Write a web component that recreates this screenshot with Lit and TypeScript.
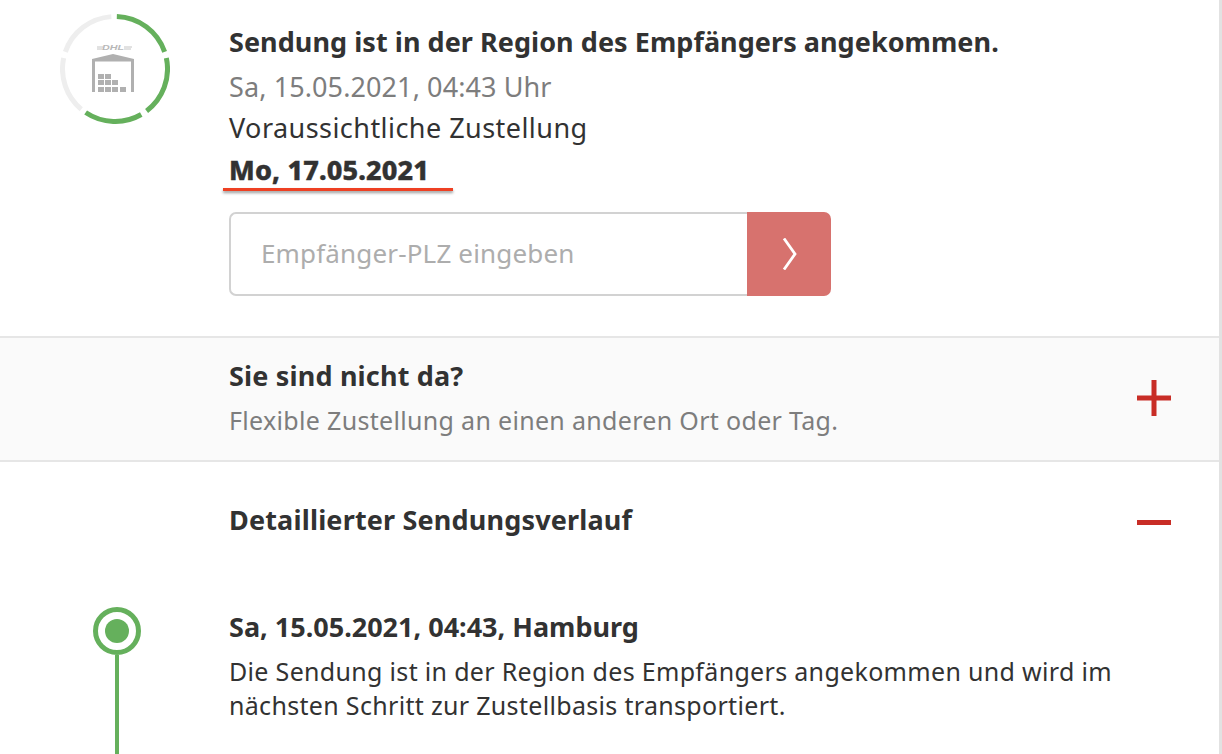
import { LitElement, html, css, svg } from "lit";
import { customElement } from "lit/decorators.js";

// five ring segments, clockwise from twelve o'clock
const arc = (from: number, to: number) => {
  const pt = (a: number) => {
    const r = ((a - 90) * Math.PI) / 180;
    return `${(55 + 52.5 * Math.cos(r)).toFixed(2)} ${(55 + 52.5 * Math.sin(r)).toFixed(2)}`;
  };
  return `M${pt(from)} A52.5 52.5 0 0 1 ${pt(to)}`;
};

const segments = [
  { from: 2, to: 71, color: "#65b05c" },
  { from: 78, to: 143, color: "#65b05c" },
  { from: 150, to: 214, color: "#65b05c" },
  { from: 220, to: 282, color: "#eeeeee" },
  { from: 289, to: 356, color: "#eeeeee" },
];

// crates in the warehouse door: [x, y]
const crates = [
  [38, 60],
  [45, 60],
  [38, 66],
  [45, 66],
  [52, 66],
  [38, 73],
  [45, 73],
  [52, 73],
  [60, 73],
];

@customElement("app-root")
export class AppRoot extends LitElement {
  static styles = css`
    :host {
      display: block;
      width: 1222px;
      height: 754px;
      overflow: hidden;
      background: #fff;
      font-family: "Noto Sans", sans-serif;
      color: #323232;
      font-size: 25px;
      box-sizing: border-box;
      border-right: 3px solid #e2e2e2;
    }
    .row {
      display: grid;
      grid-template-columns: 229px 1fr;
    }
    .status {
      height: 336px;
      padding-top: 14px;
      box-sizing: border-box;
    }
    .ring {
      margin-left: 60px;
      width: 110px;
      height: 110px;
      display: block;
    }
    .status-text {
      padding-top: 7px;
    }
    .title {
      font-weight: 700;
      font-size: 27px;
      line-height: 41px;
      letter-spacing: 0.05px;
      margin-bottom: 4px;
    }
    .muted {
      color: #7d7d7d;
      line-height: 41px;
    }
    .status-text .muted,
    .plain {
      font-size: 27px;
      line-height: 41px;
      letter-spacing: 0.1px;
    }
    .plain {
      letter-spacing: 0.45px;
    }
    .date {
      display: inline-block;
      font-weight: 800;
      font-size: 27px;
      line-height: 36px;
      margin-top: 4px;
      letter-spacing: 0.15px;
      vertical-align: top;
      -webkit-text-stroke: 0.4px #323232;
    }
    .date-line {
      width: 230px;
      height: 3px;
      margin-left: -6px;
      background: #ee4023;
      box-shadow: 0 2px 3px rgba(0, 0, 0, 0.4);
    }
    .plz {
      display: flex;
      width: 602px;
      height: 84px;
      margin-top: 21px;
    }
    .plz-input {
      flex: 1;
      display: flex;
      align-items: center;
      padding-left: 30px;
      padding-bottom: 2px;
      border: 2px solid #d2d2d2;
      border-right: none;
      border-radius: 7px 0 0 7px;
      color: #adadad;
      font-size: 26px;
      letter-spacing: 0.16px;
    }
    .plz-button {
      width: 84px;
      display: flex;
      align-items: center;
      justify-content: center;
      background: #d7726e;
      border-radius: 0 7px 7px 0;
    }
    .away {
      height: 126px;
      box-sizing: border-box;
      border-top: 2px solid #e6e6e6;
      border-bottom: 2px solid #e6e6e6;
      background: #fafafa;
    }
    .section-body {
      display: flex;
      justify-content: space-between;
      align-items: center;
      padding-right: 48px;
    }
    .section-title {
      font-weight: 700;
      font-size: 27px;
      line-height: 38px;
      letter-spacing: 0.17px;
    }
    .away-text {
      padding-top: 4px;
    }
    .away .muted {
      line-height: 50px;
      letter-spacing: 0.32px;
    }
    .plus {
      margin-bottom: 2px;
    }
    .minus {
      margin-top: 4px;
    }
    .details {
      height: 116px;
    }
    .event {
      height: 176px;
    }
    .event-mark {
      display: flex;
      flex-direction: column;
      align-items: center;
      width: 48px;
      margin-left: 93px;
      padding-top: 29px;
    }
    .dot {
      width: 48px;
      height: 48px;
      box-sizing: border-box;
      border: 5px solid #65b05c;
      border-radius: 50%;
      display: flex;
      align-items: center;
      justify-content: center;
    }
    .dot span {
      width: 24px;
      height: 24px;
      border-radius: 50%;
      background: #65b05c;
    }
    .stem {
      width: 4px;
      height: 120px;
      background: #65b05c;
    }
    .event-body {
      padding-top: 29px;
    }
    .event-title {
      font-weight: 700;
      font-size: 27px;
      line-height: 40px;
    }
    .event-text {
      margin-top: 7px;
      line-height: 34px;
      width: 900px;
      letter-spacing: 0.32px;
    }
    .logo {
      font-family: "Liberation Sans", sans-serif;
      font-size: 8px;
      font-weight: 700;
      font-style: italic;
    }
  `;

  render() {
    return html`
      <section class="row status">
        <svg class="ring" viewBox="0 0 110 110">
          ${segments.map(
            (s) => svg`<path d=${arc(s.from, s.to)} fill="none" stroke=${s.color} stroke-width="5"></path>`
          )}
          <text class="logo" x="42" y="36" textLength="22" lengthAdjust="spacingAndGlyphs" fill="#b8b8b8">DHL</text>
          <path d="M37 33h6M37 35h5M64 33h8M64 35h7" stroke="#c4c4c4" stroke-width="1" fill="none"></path>
          <path d="M32 45l21-5 21 5v33h-3V47.500H35V78h-3z" fill="#b0b0b0"></path>
          ${crates.map(([x, y]) => svg`<rect x=${x} y=${y} width="6" height="5" fill="#b0b0b0"></rect>`)}
        </svg>
        <div class="status-text">
          <div class="title">Sendung ist in der Region des Empfängers angekommen.</div>
          <div class="muted">Sa, 15.05.2021, 04:43 Uhr</div>
          <div class="plain">Voraussichtliche Zustellung</div>
          <div class="date">Mo, 17.05.2021</div>
          <div class="date-line"></div>
          <div class="plz">
            <div class="plz-input">Empfänger-PLZ eingeben</div>
            <div class="plz-button">
              <svg width="16" height="32" viewBox="0 0 16 32">
                <path d="M3 0.500l11 15.500L3 31.500" fill="none" stroke="#fff" stroke-width="2.800"></path>
              </svg>
            </div>
          </div>
        </div>
      </section>
      <section class="row away">
        <div></div>
        <div class="section-body">
          <div class="away-text">
            <div class="section-title">Sie sind nicht da?</div>
            <div class="muted">Flexible Zustellung an einen anderen Ort oder Tag.</div>
          </div>
          <svg class="plus" width="34" height="36" viewBox="0 0 34 36">
            <path d="M0 18h34M17 0v36" stroke="#c82d26" stroke-width="5" fill="none"></path>
          </svg>
        </div>
      </section>
      <section class="row details">
        <div></div>
        <div class="section-body">
          <div class="section-title">Detaillierter Sendungsverlauf</div>
          <svg class="minus" width="34" height="5" viewBox="0 0 34 5"><rect width="34" height="5" fill="#c82d26"></rect></svg>
        </div>
      </section>
      <section class="row event">
        <div class="event-mark">
          <div class="dot"><span></span></div>
          <div class="stem"></div>
        </div>
        <div class="event-body">
          <div class="event-title">Sa, 15.05.2021, 04:43, Hamburg</div>
          <div class="event-text">
            Die Sendung ist in der Region des Empfängers angekommen und wird im nächsten Schritt zur Zustellbasis
            transportiert.
          </div>
        </div>
      </section>
    `;
  }
}
